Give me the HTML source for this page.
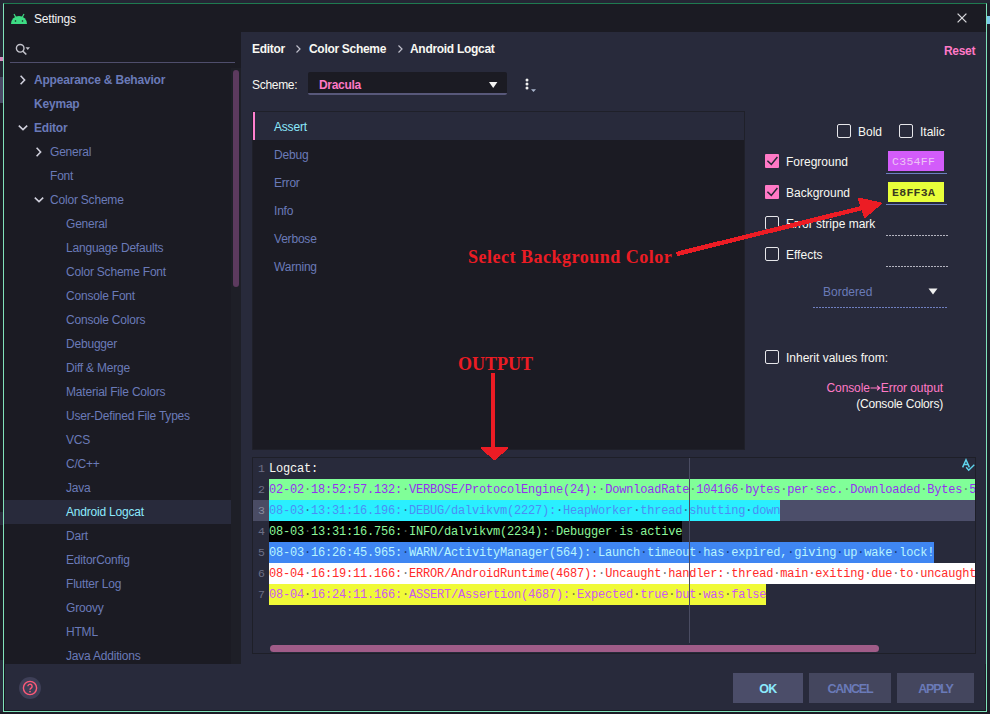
<!DOCTYPE html>
<html><head><meta charset="utf-8">
<style>
*{margin:0;padding:0;box-sizing:border-box}
html,body{width:990px;height:714px;overflow:hidden;background:#21222c;font-family:"Liberation Sans",sans-serif;font-size:11.5px}
.a{position:absolute}
.t{position:absolute;white-space:pre;line-height:14px}
#win{left:3px;top:3px;width:984px;height:709px;border:1px solid #80e2ba;border-top-color:#1f7a50;background:#282a3b}
#winin{left:4px;top:4px;width:982px;height:707px;border:1px solid #16161e;border-top:none;border-right-color:#1e1e28}
#title{left:4px;top:4px;width:982px;height:28px;background:#1b1b23}
#side{left:4px;top:32px;width:237px;height:632px;background:#1b1b23;overflow:hidden}
#pane{left:241px;top:32px;width:745px;height:632px;background:#282a3b}
#bottom{left:5px;top:664px;width:980px;height:46px;background:#282a3b}

.b{font-weight:bold}
.chev{position:absolute;width:6px;height:6px;border-right:1.8px solid #d0d0dc;border-bottom:1.8px solid #d0d0dc}
.cb{position:absolute;width:14px;height:14px;border:1.5px solid #e6e6ea;border-radius:2px}
.cbon{position:absolute;width:14px;height:14px;background:#ff79c6;border-radius:2px}
.mono{font-family:"Liberation Mono",monospace;font-size:12px;letter-spacing:-0.2px}
.ln{position:absolute;left:0;width:718px;height:21px;white-space:pre;line-height:21px}
.gut{position:absolute;width:16px;height:21px;line-height:21px;text-align:right;color:#6a7ab8;font-family:"Liberation Mono",monospace;font-size:11.67px;padding-right:3px}
</style></head><body>
<div class="a" style="left:0;top:0;width:3px;height:77px;background:#252634"></div>
<div class="a" style="left:0;top:57px;width:3px;height:4px;background:#d88cc0"></div>
<div class="a" style="left:0;top:77px;width:3px;height:26px;background:#4a4a66"></div>
<div class="a" style="left:0;top:103px;width:3px;height:611px;background:#1b1b23"></div>
<div class="a" style="left:0;top:512px;width:3px;height:13px;background:#2a2b3c"></div>
<div class="a" style="left:0;top:660px;width:3px;height:54px;background:#282a3b"></div>
<div class="a" style="left:987px;top:0;width:3px;height:714px;background:#1e1f29"></div>
<div class="a" style="left:987px;top:16px;width:3px;height:8px;background:#7ac8e8"></div>
<div class="a" style="left:0;top:0;width:990px;height:3px;background:#252634"></div>
<div class="a" style="left:0;top:712px;width:990px;height:2px;background:#1c1c26"></div>
<div id="win" class="a"></div><div id="winin" class="a"></div>
<div id="title" class="a">
  <svg class="a" style="left:6px;top:8.5px" width="18" height="12" viewBox="0 0 18 12">
    <path d="M1 11 A8 8 0 0 1 17 11 Z" fill="#3ddc84"/>
    <line x1="4" y1="1" x2="5.6" y2="4" stroke="#3ddc84" stroke-width="1.2"/>
    <line x1="14" y1="1" x2="12.4" y2="4" stroke="#3ddc84" stroke-width="1.2"/>
    <circle cx="5.5" cy="8" r="0.8" fill="#1b1b23"/><circle cx="12.5" cy="8" r="0.8" fill="#1b1b23"/>
  </svg>
  <div class="t" style="left:30px;top:8px;color:#f4f4f4;font-size:12px;letter-spacing:-0.2px">Settings</div>
  <svg class="a" style="left:948px;top:4px" width="20" height="20" viewBox="952 8 20 20"><path d="M957.6 13.6L966.4 22.4M966.4 13.6L957.6 22.4" stroke="#d8d8dc" stroke-width="1.3"/></svg>
</div>
<div id="side" class="a"></div>
<div id="pane" class="a"></div>
<!-- sidebar -->
<svg class="a" style="left:14px;top:42px" width="18" height="16" viewBox="0 0 18 16"><circle cx="6.2" cy="6.3" r="3.8" fill="none" stroke="#c4c4cc" stroke-width="1.4"/><path d="M9 9.2L12.3 12.5" stroke="#c4c4cc" stroke-width="1.6"/><path d="M11.5 5.3h4.5l-2.25 2.7z" fill="#c4c4cc"/></svg>
<div class="a" style="left:10px;top:62px;width:225px;height:1px;background:#4f4e6c"></div>
<div class="a" style="left:231px;top:68px;width:10px;height:596px;background:#1e1f27"></div>
<div class="a" style="left:233px;top:70px;width:6px;height:217px;background:#5c3a5e;border-radius:3px"></div>
<div class="a" style="left:4px;top:500px;width:227px;height:24px;background:#282a3b"></div>
<div class="t" style="left:34px;top:72.5px;color:#6a7ab8;font-weight:bold;font-size:12px;letter-spacing:-0.2px">Appearance &amp; Behavior</div>
<svg class="a" style="left:18.0px;top:73.5px" width="10" height="12" viewBox="0 0 10 12"><path d="M2.6 1.8L6.6 6L2.6 10.2" fill="none" stroke="#d0d0dc" stroke-width="1.6"/></svg>
<div class="t" style="left:34px;top:96.5px;color:#6a7ab8;font-weight:bold;font-size:12px;letter-spacing:-0.2px">Keymap</div>
<div class="t" style="left:34px;top:120.5px;color:#6a7ab8;font-weight:bold;font-size:12px;letter-spacing:-0.2px">Editor</div>
<svg class="a" style="left:17.0px;top:122.5px" width="12" height="10" viewBox="0 0 12 10"><path d="M1.8 2.6L6 6.6L10.2 2.6" fill="none" stroke="#d0d0dc" stroke-width="1.6"/></svg>
<div class="t" style="left:50px;top:144.5px;color:#6a7ab8;font-size:12px;letter-spacing:-0.2px">General</div>
<svg class="a" style="left:34.0px;top:145.5px" width="10" height="12" viewBox="0 0 10 12"><path d="M2.6 1.8L6.6 6L2.6 10.2" fill="none" stroke="#d0d0dc" stroke-width="1.6"/></svg>
<div class="t" style="left:50px;top:168.5px;color:#6a7ab8;font-size:12px;letter-spacing:-0.2px">Font</div>
<div class="t" style="left:50px;top:192.5px;color:#6a7ab8;font-size:12px;letter-spacing:-0.2px">Color Scheme</div>
<svg class="a" style="left:33.0px;top:194.5px" width="12" height="10" viewBox="0 0 12 10"><path d="M1.8 2.6L6 6.6L10.2 2.6" fill="none" stroke="#d0d0dc" stroke-width="1.6"/></svg>
<div class="t" style="left:66px;top:216.5px;color:#6a7ab8;font-size:12px;letter-spacing:-0.2px">General</div>
<div class="t" style="left:66px;top:240.5px;color:#6a7ab8;font-size:12px;letter-spacing:-0.2px">Language Defaults</div>
<div class="t" style="left:66px;top:264.5px;color:#6a7ab8;font-size:12px;letter-spacing:-0.2px">Color Scheme Font</div>
<div class="t" style="left:66px;top:288.5px;color:#6a7ab8;font-size:12px;letter-spacing:-0.2px">Console Font</div>
<div class="t" style="left:66px;top:312.5px;color:#6a7ab8;font-size:12px;letter-spacing:-0.2px">Console Colors</div>
<div class="t" style="left:66px;top:336.5px;color:#6a7ab8;font-size:12px;letter-spacing:-0.2px">Debugger</div>
<div class="t" style="left:66px;top:360.5px;color:#6a7ab8;font-size:12px;letter-spacing:-0.2px">Diff &amp; Merge</div>
<div class="t" style="left:66px;top:384.5px;color:#6a7ab8;font-size:12px;letter-spacing:-0.2px">Material File Colors</div>
<div class="t" style="left:66px;top:408.5px;color:#6a7ab8;font-size:12px;letter-spacing:-0.2px">User-Defined File Types</div>
<div class="t" style="left:66px;top:432.5px;color:#6a7ab8;font-size:12px;letter-spacing:-0.2px">VCS</div>
<div class="t" style="left:66px;top:456.5px;color:#6a7ab8;font-size:12px;letter-spacing:-0.2px">C/C++</div>
<div class="t" style="left:66px;top:480.5px;color:#6a7ab8;font-size:12px;letter-spacing:-0.2px">Java</div>
<div class="t" style="left:66px;top:504.5px;color:#8be9fd;font-size:12px;letter-spacing:-0.2px">Android Logcat</div>
<div class="t" style="left:66px;top:528.5px;color:#6a7ab8;font-size:12px;letter-spacing:-0.2px">Dart</div>
<div class="t" style="left:66px;top:552.5px;color:#6a7ab8;font-size:12px;letter-spacing:-0.2px">EditorConfig</div>
<div class="t" style="left:66px;top:576.5px;color:#6a7ab8;font-size:12px;letter-spacing:-0.2px">Flutter Log</div>
<div class="t" style="left:66px;top:600.5px;color:#6a7ab8;font-size:12px;letter-spacing:-0.2px">Groovy</div>
<div class="t" style="left:66px;top:624.5px;color:#6a7ab8;font-size:12px;letter-spacing:-0.2px">HTML</div>
<div class="t" style="left:66px;top:648.5px;color:#6a7ab8;font-size:12px;letter-spacing:-0.2px">Java Additions</div>
<!-- pane content -->
<div class="t b" style="left:252px;top:42px;color:#f8f8f2;font-size:12px;letter-spacing:-0.3px">Editor</div>
<svg class="a" style="left:294px;top:43px" width="10" height="12" viewBox="0 0 10 12"><path d="M2.5 2.5L6 6L2.5 9.5" fill="none" stroke="#c0c0cc" stroke-width="1.2"/></svg>
<div class="t b" style="left:309px;top:42px;color:#f8f8f2;font-size:12px;letter-spacing:-0.3px">Color Scheme</div>
<svg class="a" style="left:396px;top:43px" width="10" height="12" viewBox="0 0 10 12"><path d="M2.5 2.5L6 6L2.5 9.5" fill="none" stroke="#c0c0cc" stroke-width="1.2"/></svg>
<div class="t b" style="left:410px;top:42px;color:#f8f8f2;font-size:12px;letter-spacing:-0.3px">Android Logcat</div>
<div class="t b" style="left:944px;top:44px;color:#ff79c6;font-size:12px;letter-spacing:-0.3px">Reset</div>
<div class="t" style="left:252px;top:77.5px;color:#f8f8f2;font-size:12px;letter-spacing:-0.3px">Scheme:</div>
<div class="a" style="left:308px;top:72px;width:199px;height:23px;background:#1b1b23;border-radius:2px;border-bottom:2px solid #58587a"></div>
<div class="t b" style="left:319px;top:77.5px;color:#ff79c6;font-size:12px;letter-spacing:-0.3px">Dracula</div>
<svg class="a" style="left:488px;top:81px" width="11" height="8" viewBox="0 0 11 8"><path d="M1 1h8.4l-4.2 6z" fill="#f4f4f4"/></svg>
<svg class="a" style="left:520px;top:74px" width="20" height="20" viewBox="520 74 20 20"><circle cx="527" cy="80" r="1.5" fill="#f0f0f0"/><circle cx="527" cy="84" r="1.5" fill="#f0f0f0"/><circle cx="527" cy="88" r="1.5" fill="#f0f0f0"/><path d="M531 89.2h5l-2.5 2.8z" fill="#a9b5cc"/></svg>
<div class="a" style="left:252px;top:111px;width:493px;height:339px;background:#1b1b23;border:1px solid #1f2029"></div>
<div class="a" style="left:253px;top:112px;width:491px;height:28px;background:#282a3b"></div>
<div class="a" style="left:253px;top:112px;width:2px;height:28px;background:#ff80cf"></div>
<div class="t" style="left:274px;top:119.5px;color:#8be9fd;font-size:12px;letter-spacing:-0.2px">Assert</div>
<div class="t" style="left:274px;top:147.5px;color:#6a7ab8;font-size:12px;letter-spacing:-0.2px">Debug</div>
<div class="t" style="left:274px;top:175.5px;color:#6a7ab8;font-size:12px;letter-spacing:-0.2px">Error</div>
<div class="t" style="left:274px;top:203.5px;color:#6a7ab8;font-size:12px;letter-spacing:-0.2px">Info</div>
<div class="t" style="left:274px;top:231.5px;color:#6a7ab8;font-size:12px;letter-spacing:-0.2px">Verbose</div>
<div class="t" style="left:274px;top:259.5px;color:#6a7ab8;font-size:12px;letter-spacing:-0.2px">Warning</div>
<div class="cb" style="left:837px;top:124px"></div><div class="t" style="left:858px;top:124.5px;color:#f8f8f2;font-size:12px">Bold</div>
<div class="cb" style="left:899px;top:124px"></div><div class="t" style="left:920px;top:124.5px;color:#f8f8f2;font-size:12px">Italic</div>
<svg class="a" style="left:765px;top:154px" width="14" height="14" viewBox="0 0 14 14"><rect width="14" height="14" rx="1" fill="#ff79c6"/><path d="M2.4 6.8L6.3 10.4L12.4 3" fill="none" stroke="#262734" stroke-width="1.5"/></svg><div class="t" style="left:786px;top:154.5px;color:#f8f8f2;font-size:12px">Foreground</div>
<svg class="a" style="left:765px;top:185px" width="14" height="14" viewBox="0 0 14 14"><rect width="14" height="14" rx="1" fill="#ff79c6"/><path d="M2.4 6.8L6.3 10.4L12.4 3" fill="none" stroke="#262734" stroke-width="1.5"/></svg><div class="t" style="left:786px;top:185.5px;color:#f8f8f2;font-size:12px">Background</div>
<div class="cb" style="left:765px;top:216px"></div><div class="t" style="left:786px;top:216.5px;color:#f8f8f2;font-size:12px">Error stripe mark</div>
<div class="cb" style="left:765px;top:247px"></div><div class="t" style="left:786px;top:247.5px;color:#f8f8f2;font-size:12px">Effects</div>
<div class="a" style="left:888px;top:151px;width:56px;height:20px;background:#d35cfa"></div><div class="t mono" style="left:892px;top:155px;color:#ecc4f4;font-family:'Liberation Mono';font-size:11.5px;letter-spacing:0.3px">C354FF</div>
<div class="a" style="left:886px;top:173px;width:61px;height:1px;background:#6d7fc0"></div>
<div class="a" style="left:888px;top:182px;width:56px;height:20px;background:#e8ff3a"></div><div class="t mono" style="left:892px;top:185.5px;color:#3a3a20;font-family:'Liberation Mono';font-size:11.5px;font-weight:bold;letter-spacing:0.3px">E8FF3A</div>
<div class="a" style="left:886px;top:204px;width:61px;height:1px;background:#6d7fc0"></div>
<div class="a" style="left:886px;top:235px;width:62px;height:1px;background:repeating-linear-gradient(90deg,#b4b4c0 0 2px,transparent 2px 3px)"></div>
<div class="a" style="left:886px;top:266px;width:62px;height:1px;background:repeating-linear-gradient(90deg,#b4b4c0 0 2px,transparent 2px 3px)"></div>
<div class="t" style="left:823px;top:285px;color:#6a7ab8;font-size:12px">Bordered</div>
<svg class="a" style="left:928px;top:288px" width="10" height="7" viewBox="0 0 10 7"><path d="M0.5 0.5h9l-4.5 6z" fill="#f0f0f0"/></svg>
<div class="a" style="left:813px;top:307px;width:135px;height:1px;background:repeating-linear-gradient(90deg,#6f7fc0 0 2px,transparent 2px 3px)"></div>
<div class="cb" style="left:765px;top:350px"></div><div class="t" style="left:786px;top:350.5px;color:#f8f8f2;font-size:12px">Inherit values from:</div>
<div class="t" style="right:47px;top:380.5px;color:#ff79c6;font-size:12px;letter-spacing:-0.1px">Console<svg width="11" height="8" viewBox="0 0 11 8" style="vertical-align:0px;margin:0 0 0 0"><path d="M0.5 4H9.5M7 1.8L9.8 4L7 6.2" fill="none" stroke="#ff79c6" stroke-width="1.1"/></svg>Error output</div>
<div class="t" style="right:47px;top:397px;color:#f8f8f2;font-size:12px;letter-spacing:-0.2px">(Console Colors)</div>
<!-- editor -->
<div class="a" style="left:252px;top:457px;width:724px;height:197px;background:#282a3b;border:1px solid #1e1f28"></div>
<div class="a" style="left:253px;top:500px;width:16px;height:21px;background:#4a4c64"></div>
<div class="a" style="left:269px;top:500px;width:706px;height:21px;background:#4c4e6a"></div>
<div class="a" style="left:269px;top:458px;width:706px;height:195px;overflow:hidden;padding-top:0">
<div class="a mono" style="left:0;top:0px;height:21px;line-height:23px;white-space:pre;color:#f8f8f2">Logcat:</div>
<div class="a mono" style="left:0;top:21px;height:21px;line-height:23px;white-space:pre;background:#80ff98;color:#9530f0">02-02<span style="color:#5a8a6a">·</span>18:52:57.132:<span style="color:#5a8a6a">·</span>VERBOSE/ProtocolEngine(24):<span style="color:#5a8a6a">·</span>DownloadRate<span style="color:#5a8a6a">·</span>104166<span style="color:#5a8a6a">·</span>bytes<span style="color:#5a8a6a">·</span>per<span style="color:#5a8a6a">·</span>sec.<span style="color:#5a8a6a">·</span>Downloaded<span style="color:#5a8a6a">·</span>Bytes<span style="color:#5a8a6a">·</span>5152<span style="color:#5a8a6a">·</span>in<span style="color:#5a8a6a">·</span>file</div>
<div class="a mono" style="left:0;top:42px;height:21px;line-height:23px;white-space:pre;background:#2aefff;color:#4a8ef5">08-03<span style="color:#2a6a8a">·</span>13:31:16.196:<span style="color:#2a6a8a">·</span>DEBUG/dalvikvm(2227):<span style="color:#2a6a8a">·</span>HeapWorker<span style="color:#2a6a8a">·</span>thread<span style="color:#2a6a8a">·</span>shutting<span style="color:#2a6a8a">·</span>down</div>
<div class="a mono" style="left:0;top:63px;height:21px;line-height:23px;white-space:pre;background:#000000;color:#8cf59a">08-03<span style="color:#4a5a50">·</span>13:31:16.756:<span style="color:#4a5a50">·</span>INFO/dalvikvm(2234):<span style="color:#4a5a50">·</span>Debugger<span style="color:#4a5a50">·</span>is<span style="color:#4a5a50">·</span>active</div>
<div class="a mono" style="left:0;top:84px;height:21px;line-height:23px;white-space:pre;background:#3f86f2;color:#b8f4ff">08-03<span style="color:#1a3a70">·</span>16:26:45.965:<span style="color:#1a3a70">·</span>WARN/ActivityManager(564):<span style="color:#1a3a70">·</span>Launch<span style="color:#1a3a70">·</span>timeout<span style="color:#1a3a70">·</span>has<span style="color:#1a3a70">·</span>expired,<span style="color:#1a3a70">·</span>giving<span style="color:#1a3a70">·</span>up<span style="color:#1a3a70">·</span>wake<span style="color:#1a3a70">·</span>lock!</div>
<div class="a mono" style="left:0;top:105px;height:21px;line-height:23px;white-space:pre;background:#ffffff;color:#ff2a2a">08-04<span style="color:#707070">·</span>16:19:11.166:<span style="color:#707070">·</span>ERROR/AndroidRuntime(4687):<span style="color:#707070">·</span>Uncaught<span style="color:#707070">·</span>handler:<span style="color:#707070">·</span>thread<span style="color:#707070">·</span>main<span style="color:#707070">·</span>exiting<span style="color:#707070">·</span>due<span style="color:#707070">·</span>to<span style="color:#707070">·</span>uncaught<span style="color:#707070">·</span>exception</div>
<div class="a mono" style="left:0;top:126px;height:21px;line-height:23px;white-space:pre;background:#f0fa38;color:#cc58f0">08-04<span style="color:#707040">·</span>16:24:11.166:<span style="color:#707040">·</span>ASSERT/Assertion(4687):<span style="color:#707040">·</span>Expected<span style="color:#707040">·</span>true<span style="color:#707040">·</span>but<span style="color:#707040">·</span>was<span style="color:#707040">·</span>false</div>
</div>
<div class="a mono" style="left:258px;top:457.5px;height:21px;line-height:21px;font-size:11.5px;letter-spacing:0;color:#6e7086">1</div>
<div class="a mono" style="left:258px;top:478.5px;height:21px;line-height:21px;font-size:11.5px;letter-spacing:0;color:#6e7086">2</div>
<div class="a mono" style="left:258px;top:499.5px;height:21px;line-height:21px;font-size:11.5px;letter-spacing:0;color:#8a8c9e">3</div>
<div class="a mono" style="left:258px;top:520.5px;height:21px;line-height:21px;font-size:11.5px;letter-spacing:0;color:#6e7086">4</div>
<div class="a mono" style="left:258px;top:541.5px;height:21px;line-height:21px;font-size:11.5px;letter-spacing:0;color:#6e7086">5</div>
<div class="a mono" style="left:258px;top:562.5px;height:21px;line-height:21px;font-size:11.5px;letter-spacing:0;color:#6e7086">6</div>
<div class="a mono" style="left:258px;top:583.5px;height:21px;line-height:21px;font-size:11.5px;letter-spacing:0;color:#6e7086">7</div>
<div class="a" style="left:689px;top:458px;width:1px;height:185px;background:#4a4c62"></div>
<div class="a" style="left:270px;top:644.5px;width:608.5px;height:7px;background:#a05c88;border-radius:3.5px"></div>
<svg class="a" style="left:958px;top:456px" width="20" height="18" viewBox="958 456 20 18"><path d="M962.6 467.4L966 459.8L969.4 467.4M963.9 464.6h4.2" fill="none" stroke="#5fd3ec" stroke-width="1.5"/><path d="M966.2 467.2L968.7 470.2L974.3 464.8" fill="none" stroke="#5fd3ec" stroke-width="1.4"/></svg>
<div class="t" style="left:458px;top:353.5px;font-family:'Liberation Serif';font-weight:bold;font-size:18px;line-height:20px;color:#ec1c24">OUTPUT</div>
<svg class="a" style="left:440px;top:180px" width="460" height="290" viewBox="440 180 460 290" shape-rendering="crispEdges"><path d="M678.5 253.5L862 208" stroke="#ec1c24" stroke-width="4.5" stroke-linecap="round"/><path d="M859 199L880.5 203.5L865 216.5Z" fill="#ec1c24" stroke="#ec1c24" stroke-width="2.5" stroke-linejoin="round"/><path d="M492.8 375L492.8 450" stroke="#ec1c24" stroke-width="4.5" stroke-linecap="round"/><path d="M482 448L507 448L494.5 459Z" fill="#ec1c24" stroke="#ec1c24" stroke-width="2.5" stroke-linejoin="round"/></svg>
<div class="t" style="left:468px;top:246.5px;font-family:'Liberation Serif';font-weight:bold;font-size:18px;line-height:20px;color:#ec1c24;letter-spacing:0.5px">Select Background Color</div>
<div id="bottom" class="a"></div>
<div class="a" style="left:19px;top:677px;width:22px;height:22px;border-radius:50%;background:#3e3f57"></div>
<svg class="a" style="left:21px;top:679px" width="18" height="18" viewBox="0 0 18 18"><circle cx="9" cy="9" r="6.6" fill="none" stroke="#ff5a78" stroke-width="1.4"/><path d="M6.9 7.3a2.1 2.1 0 1 1 3.2 1.8c-0.8 0.5-1.1 0.9-1.1 1.7" fill="none" stroke="#ff5a78" stroke-width="1.4"/><circle cx="9" cy="12.6" r="0.9" fill="#ff5a78"/></svg>
<div class="a" style="left:733px;top:673px;width:70px;height:30px;background:#4b4d69"></div><div class="t b" style="left:733px;top:682px;width:70px;text-align:center;color:#8be9fd;font-size:12.5px;letter-spacing:-0.5px">OK</div>
<div class="a" style="left:809px;top:673px;width:82px;height:30px;background:#44465e"></div><div class="t b" style="left:809px;top:682px;width:82px;text-align:center;color:#6a7ab8;font-size:12.5px;letter-spacing:-1.2px">CANCEL</div>
<div class="a" style="left:897px;top:673px;width:77px;height:30px;background:#44465e"></div><div class="t b" style="left:897px;top:682px;width:77px;text-align:center;color:#6a7ab8;font-size:12.5px;letter-spacing:-1.2px">APPLY</div>
</body></html>
